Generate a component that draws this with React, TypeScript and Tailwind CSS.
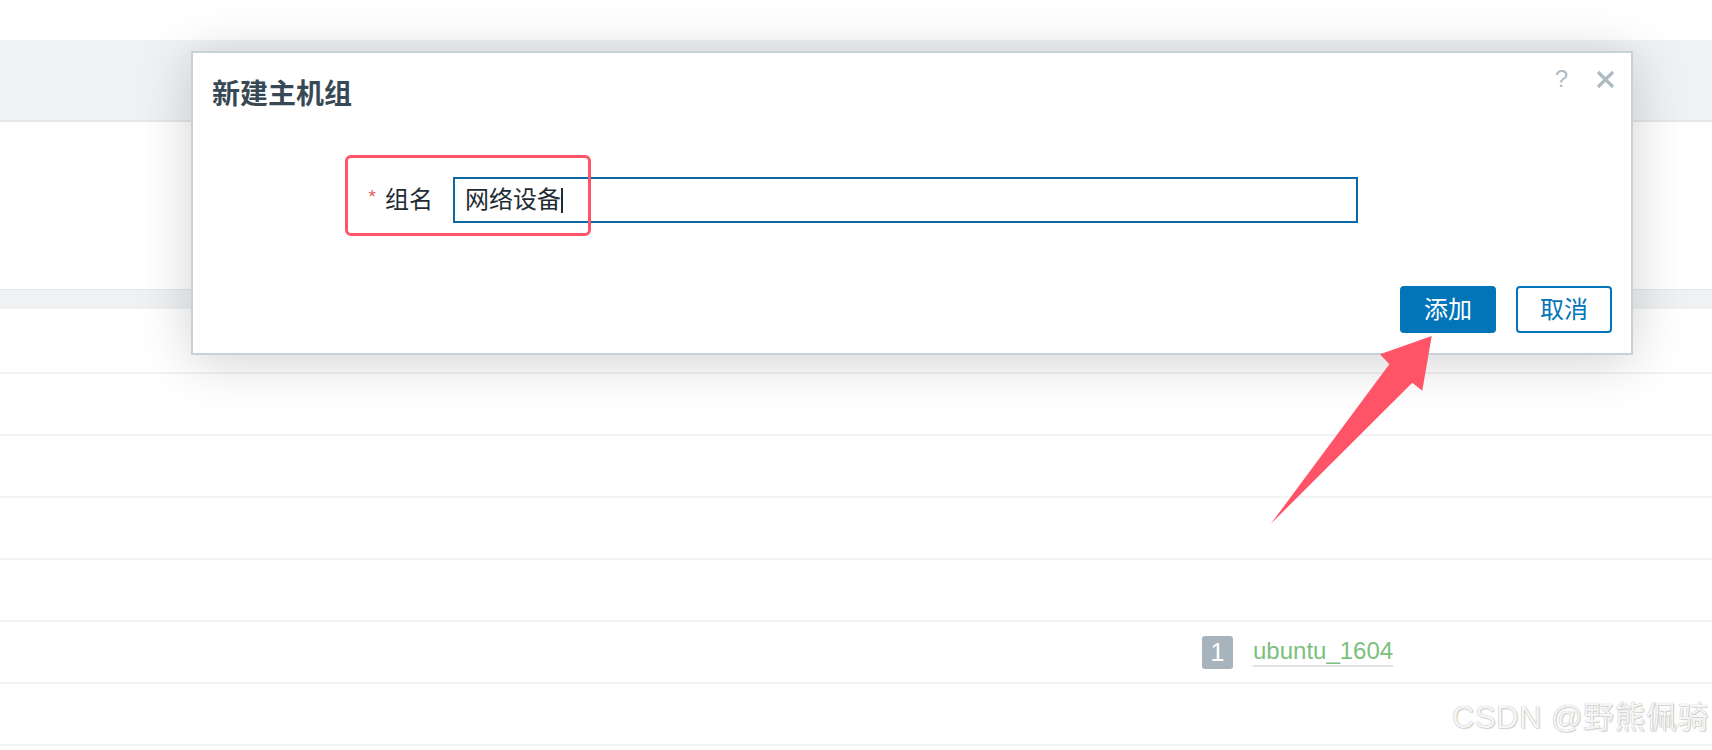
export default function App() {
  const rows = Array.from({ length: 7 }, (_, i) => i);
  return (
    <div className="relative w-[1712px] h-[750px] overflow-hidden bg-white font-['Liberation_Sans','Noto_Sans_CJK_SC',sans-serif]">
      {/* background page */}
      <div className="h-[40px] bg-white" />
      <div className="h-[82px] bg-[#eff1f3] border-b-2 border-[#e4e7ea]" />
      <div className="h-[167px] bg-white" />
      <div className="h-[20px] bg-[#eff1f3] border-t border-[#e3e6e9]" />
      <div className="h-[63px] bg-white" />
      {rows.map((i) => (
        <div key={i} className="h-[62px] border-t-2 border-[#f2f2f2] bg-white flex items-center">
          {i === 4 && (
            <div className="flex items-center pl-[1202px]">
              <div className="w-[31px] h-[33px] rounded-[3px] bg-[#a7b4bd] text-white text-[25px] leading-none flex items-center justify-center">
                1
              </div>
              <span className="ml-[20px] text-[24px] leading-[28px] text-[#7cc07e] border-b-2 border-[#dde3e7]">
                ubuntu_1604
              </span>
            </div>
          )}
        </div>
      ))}

      {/* dialog */}
      <div className="absolute left-[191px] top-[51px] w-[1442px] border-2 border-[#c8d1d6] bg-white shadow-[0_6px_50px_rgba(0,0,0,0.18)] flex flex-col">
        <div className="flex justify-between items-start pl-[19px] pr-[16px] pt-[14px]">
          <div className="mt-[10px] text-[28px] leading-[36px] font-bold text-[#384956]">新建主机组</div>
          <div className="flex items-center h-[24px]">
            <span className="text-[24px] leading-none text-[#aebbc3]">?</span>
            <svg className="ml-[28px]" width="19" height="19" viewBox="0 0 19 19">
              <path d="M2 2 L17 17 M17 2 L2 17" stroke="#aebbc3" strokeWidth="3.2" strokeLinecap="butt" />
            </svg>
          </div>
        </div>

        <div className="mt-[64px] flex items-center h-[46px]">
          <div className="w-[240px] flex justify-end items-center">
            <span className="text-[#e45959] text-[19px] leading-none mr-[9px] -mt-[8px]">*</span>
            <span className="text-[24px] leading-[30px] text-[#1f2c33]">组名</span>
          </div>
          <div className="ml-[20px] w-[905px] h-[46px] border-2 border-[#0a69a3] pl-[10px] flex items-center text-[24px] text-[#1f2c33]">
            <span>网络设备</span>
            <span className="w-[2px] h-[25px] bg-[#1f2c33]" />
          </div>
        </div>

        <div className="mt-[63px] mb-[20px] flex justify-end gap-[20px] pr-[19px]">
          <button className="w-[96px] h-[47px] rounded-[4px] bg-[#0275b8] text-white text-[24px]">添加</button>
          <button className="w-[96px] h-[47px] rounded-[4px] border-2 border-[#0275b8] bg-white text-[#0275b8] text-[24px]">取消</button>
        </div>
      </div>

      {/* annotation box */}
      <div className="absolute left-[345px] top-[155px] w-[246px] h-[81px] border-[3px] border-[#ff5468] rounded-[6px]" />

      {/* annotation arrow */}
      <svg className="absolute left-0 top-0 pointer-events-none" width="1712" height="750" viewBox="0 0 1712 750">
        <polygon
          points="1431.7,336 1380,354.3 1389.3,364.3 1270.7,524 1412.3,382.7 1422.3,390.7"
          fill="#ff5468"
        />
      </svg>

      {/* watermark */}
      <div className="absolute left-[1452px] top-[700px] whitespace-nowrap text-[31px] leading-[36px] tracking-[0.5px] text-[#f6f6f6] [text-shadow:0_0_1px_rgba(0,0,0,0.35),1px_1px_1px_rgba(0,0,0,0.15)]">
        CSDN @野熊佩骑
      </div>
    </div>
  );
}
